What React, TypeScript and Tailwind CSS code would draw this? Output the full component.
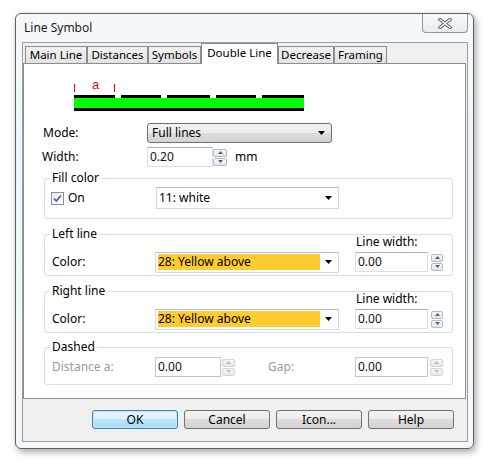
import React from "react";

const BTN =
  "bg-[linear-gradient(#f3f3f3_0%,#ebebeb_50%,#dddddd_50%,#d2d2d2_100%)] border border-[#707070] rounded-[3px]";

function DownArrow() {
  return (
    <svg width="7" height="4" viewBox="0 0 7 4">
      <path d="M0 0H7L3.5 4Z" fill="#000" />
    </svg>
  );
}

function SpinHalf({ up, disabled, h }: { up: boolean; disabled?: boolean; h: string }) {
  return (
    <div
      className={`${h} w-full border ${disabled ? "border-[#d0d3d8]" : "border-[#b4bac4]"} rounded-[2px] bg-gradient-to-b from-[#f7f8fa] to-[#e4e7eb] flex items-center justify-center`}
    >
      <svg width="5" height="3" viewBox="0 0 5 3">
        <path d={up ? "M0 3L2.5 0L5 3Z" : "M0 0H5L2.5 3Z"} fill={disabled ? "#b8bcc4" : "#4b5f8c"} />
      </svg>
    </div>
  );
}

function Spin({ w, disabled, h }: { w: string; disabled?: boolean; h: string }) {
  return (
    <div className={`${w} flex flex-col gap-[1px]`}>
      <SpinHalf up disabled={disabled} h={h} />
      <SpinHalf up={false} disabled={disabled} h={h} />
    </div>
  );
}

function Input({ w, value, disabled }: { w: string; value: string; disabled?: boolean }) {
  return (
    <div
      className={`${w} h-[20px] bg-white border ${disabled ? "border-[#c2c6cc]" : "border-[#dbdfe6] border-t-[#abadb3]"} flex items-center pl-[2px] text-[12px] text-[#111]`}
    >
      {value}
    </div>
  );
}

function ColorCombo() {
  return (
    <div className="w-[184px] h-[21px] bg-white border border-[#d5d9df] border-t-[#b9bcc2] flex items-center pl-[2px] pr-[6px]">
      <div className="w-[162px] h-[16px] bg-[#ffcb2f] flex items-center text-[12px] text-black">28: Yellow above</div>
      <div className="flex-1 flex justify-end">
        <DownArrow />
      </div>
    </div>
  );
}

function Legend({ children }: { children: React.ReactNode }) {
  return <legend className="ml-[5px] px-[2px] text-[12px] leading-[16px] text-black">{children}</legend>;
}

function LineGroup({ title, mt }: { title: string; mt: string }) {
  return (
    <fieldset className={`${mt} ml-[20px] w-[409px] border border-[#d5dfe5] rounded-[3px] pb-[2px]`}>
      <Legend>{title}</Legend>
      <div className="-mt-[7px] pl-[311px] h-[14px] leading-[14px] text-[12px] text-black">Line width:</div>
      <div className="mt-[2px] h-[22px] flex items-center">
        <span className="ml-[7px] w-[103px] text-[12px] text-black">Color:</span>
        <ColorCombo />
        <div className="ml-[16px]">
          <Input w="w-[73px]" value="0.00" />
        </div>
        <div className="ml-[3px]">
          <Spin w="w-[12px]" h="h-[8px]" />
        </div>
      </div>
    </fieldset>
  );
}

const tabs = [
  { label: "Main Line", w: "w-[62px]" },
  { label: "Distances", w: "w-[61px]" },
  { label: "Symbols", w: "w-[53px]" },
  { label: "Double Line", w: "w-[77px]", sel: true },
  { label: "Decrease", w: "w-[56px]" },
  { label: "Framing", w: "w-[53px]" },
];

export default function App() {
  return (
    <div className="w-[493px] h-[467px] bg-white pl-[15px] pt-[13px] font-['Noto_Sans',sans-serif] text-black">
      <div className="w-[459px] h-[436px] rounded-[6px] border border-[#5c6066] bg-[linear-gradient(180deg,#f6f9fb_0%,#eef5f8_30%,#f5f8fa_100%)] shadow-[2px_3px_7px_rgba(0,0,0,0.35)]">
        {/* title bar */}
        <div className="h-[28px] flex items-start justify-between">
          <div className="h-[28px] flex items-center pl-[8px] text-[12px] text-[#1b1b1b]">Line Symbol</div>
          <div className="mr-[5px] w-[46px] h-[19px] border border-t-0 border-[#8f98a3] rounded-b-[4px] bg-gradient-to-b from-[#fbfcfd] to-[#e6ecf1] flex items-center justify-center">
            <svg width="14" height="11" viewBox="0 0 14 11">
              <path d="M2 1.5L12 9.5M12 1.5L2 9.5" stroke="#5a5f66" strokeWidth="3.4" strokeLinecap="square" />
              <path d="M2 1.5L12 9.5M12 1.5L2 9.5" stroke="#ffffff" strokeWidth="1.5" strokeLinecap="square" />
            </svg>
          </div>
        </div>
        {/* client area */}
        <div className="ml-[6px] w-[446px] h-[400px] border border-[#9a9ea3] bg-[#f0f0f0] flex flex-col">
          {/* tabs */}
          <div className="h-[20px] flex items-end pl-[2px]">
            {tabs.map((t) =>
              t.sel ? (
                <div
                  key={t.label}
                  className={`${t.w} h-[21px] -mb-[1px] relative z-10 bg-white border border-b-0 border-[#898c95] flex items-center justify-center text-[11.5px] pb-[3px]`}
                >
                  {t.label}
                </div>
              ) : (
                <div
                  key={t.label}
                  className={`${t.w} h-[17px] border border-b-0 border-[#898c95] bg-gradient-to-b from-[#f3f3f3] to-[#e3e3e3] flex items-center justify-center text-[11.5px]`}
                >
                  {t.label}
                </div>
              )
            )}
          </div>
          {/* tab panel */}
          <div className="w-[443px] h-[336px] bg-white border border-[#898c95] flex flex-col">
            <div className="mt-[13px] ml-[50px] h-[34px]">
              <svg width="232" height="34" viewBox="0 0 232 34">
                <rect x="0" y="7" width="1" height="8" fill="#ff0000" />
                <rect x="40" y="7" width="1" height="8" fill="#ff0000" />
                <text x="18" y="12" fontSize="13" fill="#ff0000" fontFamily="'Liberation Sans', sans-serif">a</text>
                <rect x="0" y="18" width="41" height="3" fill="#000" />
                <rect x="47" y="18" width="40" height="3" fill="#000" />
                <rect x="93" y="18" width="43" height="3" fill="#000" />
                <rect x="142" y="18" width="40" height="3" fill="#000" />
                <rect x="188" y="18" width="42" height="3" fill="#000" />
                <rect x="0" y="21" width="230" height="10" fill="#00ff00" />
                <rect x="0" y="31" width="230" height="3" fill="#000" />
              </svg>
            </div>
            {/* Mode */}
            <div className="mt-[12px] h-[20px] flex items-center">
              <span className="ml-[19px] w-[104px] text-[12px]">Mode:</span>
              <div className={`w-[185px] h-[20px] ${BTN} flex items-center justify-between pl-[4px] pr-[6px] text-[12px]`}>
                <span>Full lines</span>
                <DownArrow />
              </div>
            </div>
            {/* Width */}
            <div className="mt-[4px] h-[20px] flex items-center">
              <span className="ml-[18px] w-[105px] text-[12px]">Width:</span>
              <Input w="w-[66px]" value="0.20" />
              <Spin w="w-[14px]" h="h-[8px]" />
              <span className="ml-[8px] text-[12px]">mm</span>
            </div>
            {/* Fill color */}
            <fieldset className="mt-[3px] ml-[20px] w-[409px] border border-[#d5dfe5] rounded-[3px] pb-[9px]">
              <Legend>Fill color</Legend>
              <div className="mt-[1px] h-[22px] flex items-center">
                <div className="w-[111px] flex items-center">
                  <div className="ml-[6px] w-[13px] h-[13px] border border-[#8e8f8f] bg-gradient-to-br from-[#e9ebee] to-[#fdfdfd] flex items-center justify-center">
                    <svg width="11" height="11" viewBox="0 0 11 11">
                      <path d="M2 5.5L4.3 8L9 2.5" stroke="#4c61a0" strokeWidth="1.8" fill="none" />
                    </svg>
                  </div>
                  <span className="ml-[4px] text-[12px]">On</span>
                </div>
                <div className="w-[183px] h-[22px] bg-white border border-[#d5d9df] border-t-[#b9bcc2] flex items-center justify-between pl-[2px] pr-[6px] text-[12px]">
                  <span>11: white</span>
                  <DownArrow />
                </div>
              </div>
            </fieldset>
            <LineGroup title="Left line" mt="mt-[7px]" />
            <LineGroup title="Right line" mt="mt-[7px]" />
            {/* Dashed */}
            <fieldset className="mt-[6px] ml-[20px] w-[409px] border border-[#d5dfe5] rounded-[3px] pb-[7px]">
              <Legend>Dashed</Legend>
              <div className="mt-[2px] h-[20px] flex items-center">
                <span className="ml-[7px] w-[103px] text-[12px] text-[#9a9a9a]">Distance a:</span>
                <Input w="w-[66px]" value="0.00" disabled />
                <div className="ml-[1px]">
                  <Spin w="w-[13px]" h="h-[8px]" disabled />
                </div>
                <span className="ml-[33px] w-[87px] text-[12px] text-[#9a9a9a]">Gap:</span>
                <Input w="w-[73px]" value="0.00" disabled />
                <div className="ml-[2px]">
                  <Spin w="w-[13px]" h="h-[8px]" disabled />
                </div>
              </div>
            </fieldset>
          </div>
          {/* buttons */}
          <div className="mt-[11px] ml-[69px] flex gap-[6px]">
            <div className="w-[86px] h-[19px] rounded-[3px] border border-[#3c7fb1] bg-[linear-gradient(#eaf6fd_0%,#d9f0fc_50%,#bee6fd_50%,#a7d9f5_100%)] shadow-[inset_0_0_0_1px_#c5e8fa] flex items-center justify-center text-[12px]">
              OK
            </div>
            <div className={`w-[86px] h-[19px] ${BTN} flex items-center justify-center text-[12px]`}>Cancel</div>
            <div className={`w-[86px] h-[19px] ${BTN} flex items-center justify-center text-[12px]`}>Icon...</div>
            <div className={`w-[86px] h-[19px] ${BTN} flex items-center justify-center text-[12px]`}>Help</div>
          </div>
        </div>
      </div>
    </div>
  );
}
